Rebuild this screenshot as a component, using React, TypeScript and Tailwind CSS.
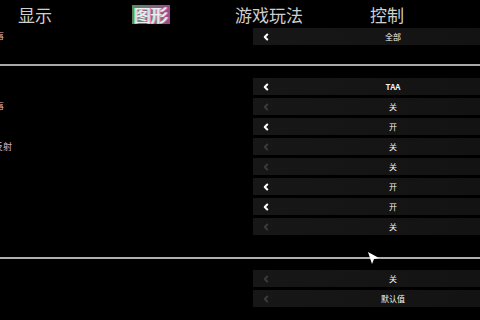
import { ChevronLeft } from "lucide-react";

type Row = { value: string; active: boolean; label?: string; labelShift?: string };

const topRows: Row[] = [{ value: "全部", active: true, label: "事", labelShift: "ml-[-5px]" }];

const midRows: Row[] = [
  { value: "TAA", active: true },
  { value: "关", active: false, label: "事", labelShift: "ml-[-5px]" },
  { value: "开", active: true },
  { value: "关", active: false, label: "反射", labelShift: "ml-[-6px]" },
  { value: "关", active: false },
  { value: "开", active: true },
  { value: "开", active: true },
  { value: "关", active: false },
];

const bottomRows: Row[] = [
  { value: "关", active: false },
  { value: "默认值", active: false },
];

function OptionRow({ row }: { row: Row }) {
  return (
    <div className="flex h-[17px] items-center">
      <div className="w-[253px] shrink-0 overflow-hidden">
        {row.label && (
          <span className={`block whitespace-nowrap text-[9px] leading-none text-[#dcb4c6] ${row.labelShift}`}>
            {row.label}
          </span>
        )}
      </div>
      <div className="relative flex h-[17px] w-[280px] shrink-0 items-center justify-center bg-gradient-to-r from-[#171717] to-[#121212]">
        <ChevronLeft
          className={`absolute left-[8px] h-[10px] w-[10px] ${row.active ? "text-white" : "text-[#3a3a3a]"}`}
          strokeWidth={5}
        />
        <span className={`text-[8px] leading-none text-[#f2f2f2] ${row.value === "TAA" ? "font-bold" : ""}`}>
          {row.value}
        </span>
      </div>
    </div>
  );
}

export default function App() {
  return (
    <div
      className="relative h-[320px] w-[480px] overflow-hidden bg-black"
      style={{ fontFamily: '"Noto Sans CJK SC", "Noto Sans", sans-serif' }}
    >
      <div className="flex h-[28px] items-center text-[17px] leading-none text-[#cfcfcf]">
        <span className="ml-[18px]">显示</span>
        <span className="ml-[80px] bg-gradient-to-r from-[#5d8a55] via-[#7a6a86] to-[#9a4a8c] px-[2px] py-[1px] text-[#eeeef4] [text-shadow:1px_0_0_#ff8ae0,-1px_0_0_#9dffa8]">
          图形
        </span>
        <span className="ml-[65px]">游戏玩法</span>
        <span className="ml-[67px]">控制</span>
      </div>

      <div className="flex flex-col">
        {topRows.map((r, i) => (
          <OptionRow key={i} row={r} />
        ))}
      </div>

      <div className="mt-[19px] h-[2px] w-full bg-[#a8a8a8]" />

      <div className="mt-[12px] flex flex-col gap-[3px]">
        {midRows.map((r, i) => (
          <OptionRow key={i} row={r} />
        ))}
      </div>

      <div className="mt-[22px] h-[2px] w-full bg-[#b0b0b0]" />

      <div className="mt-[11px] flex flex-col gap-[3px]">
        {bottomRows.map((r, i) => (
          <OptionRow key={i} row={r} />
        ))}
      </div>

      <svg className="absolute left-[367px] top-[251px]" width="13" height="14" viewBox="0 0 13 14">
        <path d="M1 1 L12 7 L7 8 L5 13 Z" fill="white" />
      </svg>
    </div>
  );
}
